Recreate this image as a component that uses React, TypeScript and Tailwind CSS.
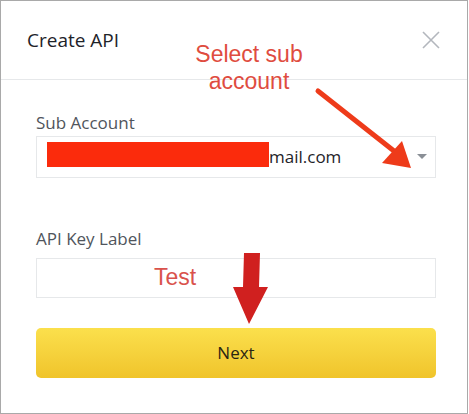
import { useState } from "react";

const ui = "font-['Open_Sans',sans-serif]";
const note = "font-['Liberation_Sans',Arial,sans-serif]";

function CloseIcon() {
  return (
    <svg width="20" height="18" viewBox="0 0 20 18" fill="none">
      <path d="M2 1 L18 17 M18 1 L2 17" stroke="#b3b7bd" strokeWidth="1.6" />
    </svg>
  );
}

function Annotations() {
  return (
    <>
      <div
        className={`${note} absolute left-[168px] top-[40px] w-[160px] text-center text-[23px] leading-[27px] text-[#df4c40]`}
      >
        Select sub
        <br />
        account
      </div>
      <div
        className={`${note} absolute left-[153px] top-[263px] text-[23px] leading-[27px] text-[#d9524c]`}
      >
        Test
      </div>
      <svg
        className="pointer-events-none absolute left-0 top-0"
        width="469"
        height="414"
        viewBox="0 0 469 414"
      >
        <line x1="317" y1="90" x2="393" y2="150" stroke="#ee3b1a" strokeWidth="5" strokeLinecap="round" />
        <polygon points="410,167 381,162 401,140" fill="#ee3b1a" />
        <polygon
          points="243,252 259,252 258,286 267,286 248,323 232,286 242,286"
          fill="#d0201f"
        />
      </svg>
    </>
  );
}

export default function App() {
  const [label, setLabel] = useState("");

  return (
    <div className={`${ui} relative h-[414px] w-[468px] border border-[#a9a9a9] bg-white`}>
      <div className="flex h-[79px] items-center justify-between border-b border-[#e6e8ea] pl-[26px] pr-[26px]">
        <h1 className="text-[19px] leading-[28px] text-[#1e2329]">Create API</h1>
        <CloseIcon />
      </div>

      <div className="flex flex-col pl-[35px] pr-[31px] pt-[31px]">
        <label className="text-[17px] leading-[24px] text-[#50555c]">Sub Account</label>
        <div className="mt-[1px] flex h-[42px] items-center justify-between border border-[#e6e8ea] pl-[10px] pr-[8px]">
          <div className="flex items-center">
            <span className="mb-[5px] inline-block h-[25px] w-[222px] bg-[#fb2b0c]" />
            <span className="text-[17px] leading-[24px] text-[#1e2329]">mail.com</span>
          </div>
          <span className="mb-[2px] h-0 w-0 border-x-[5px] border-t-[5px] border-x-transparent border-t-[#8a8f96]" />
        </div>

        <label className="mt-[49px] text-[17px] leading-[24px] text-[#50555c]">API Key Label</label>
        <input
          value={label}
          onChange={(e) => setLabel(e.target.value)}
          className="mt-[7px] h-[40px] border border-[#e6e8ea] px-[10px] text-[17px] outline-none"
        />

        <button
          type="button"
          className="mt-[30px] h-[50px] rounded-[5px] bg-gradient-to-b from-[#fbe04c] to-[#f0c42a] text-[17px] font-medium text-[#2a2513]"
        >
          Next
        </button>
      </div>

      <Annotations />
    </div>
  );
}
